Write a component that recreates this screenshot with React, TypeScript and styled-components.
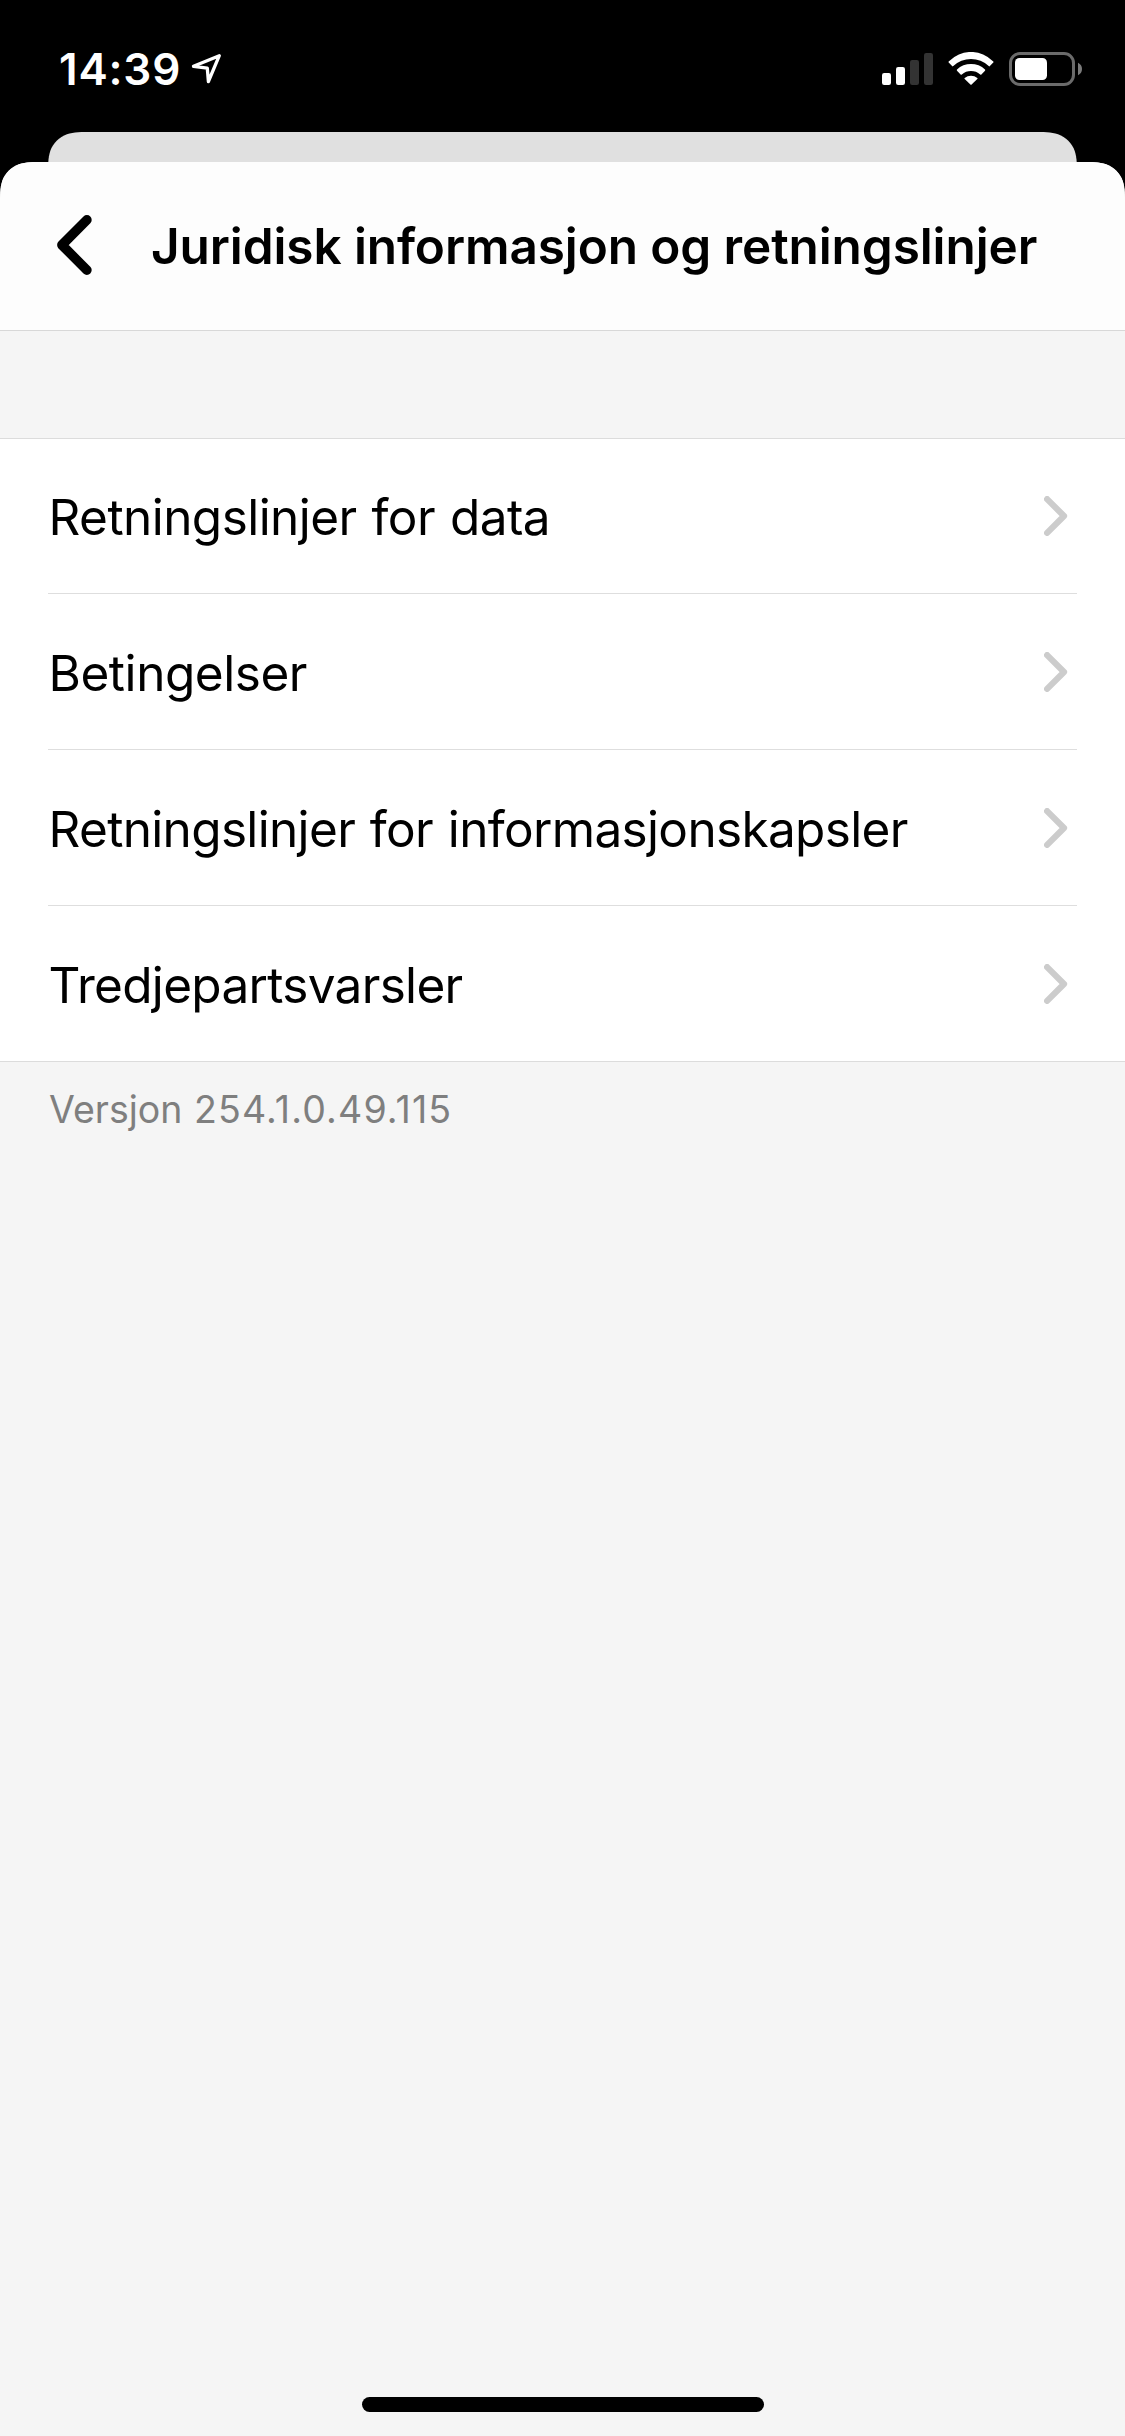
import React from "react";
import styled, { createGlobalStyle } from "styled-components";

const GlobalStyle = createGlobalStyle`
  body {
    margin: 0;
    background: #000;
    font-family: Inter, "Liberation Sans", sans-serif;
    -webkit-font-smoothing: antialiased;
  }
  * {
    box-sizing: border-box;
  }
`;

// Continuous-curvature top corners with a 30px nominal radius.
const sheetShape = (w: number, h: number) =>
  `path("M45.9 0 C32.65 0 26.05 0 18.94 2.25 C11.18 5.07 5.07 11.18 2.25 18.94 C0 26.05 0 32.65 0 45.9 V${h} H${w} V45.9 C${w} 32.65 ${w} 26.05 ${w - 2.25} 18.94 C${w - 5.07} 11.18 ${w - 11.18} 5.07 ${w - 18.94} 2.25 C${w - 26.05} 0 ${w - 32.65} 0 ${w - 45.9} 0 Z")`;

const Screen = styled.div`
  display: flex;
  flex-direction: column;
  width: 1125px;
  height: 2436px;
  background: #000;
  overflow: hidden;
`;

const StatusBar = styled.div`
  display: flex;
  justify-content: space-between;
  align-items: flex-start;
  flex: none;
  height: 132px;
  padding: 52px 42px 0 59px;
`;

const StatusGroup = styled.div`
  display: flex;
  height: 34px;
`;

const Clock = styled.span`
  width: 131px;
  color: #fff;
  font-size: 44px;
  font-weight: 600;
  line-height: 34px;
  letter-spacing: 0.8px;
  white-space: nowrap;
`;

const Glyph = styled.svg<{ $gap?: number }>`
  display: block;
  flex: none;
  margin-left: ${({ $gap = 0 }) => $gap}px;
`;

const BackSheet = styled.div`
  flex: none;
  height: 30px;
  margin: 0 48px;
  background: #e0e0e0;
  clip-path: ${sheetShape(1029, 60)};
`;

const Sheet = styled.main`
  display: flex;
  flex: 1;
  flex-direction: column;
  background: #f5f5f5;
  clip-path: ${sheetShape(1125, 2274)};
`;

const Header = styled.header`
  display: flex;
  align-items: center;
  flex: none;
  height: 169px;
  padding-left: 56px;
  background: #fdfdfd;
  border-bottom: 1px solid #d8d8d8;
`;

const BackButton = styled.button`
  display: flex;
  width: 95px;
  padding: 0 0 2px;
  border: 0;
  background: none;
`;

const Title = styled.h1`
  margin: 0;
  color: #000;
  font-size: 49.5px;
  font-weight: 600;
  line-height: 60px;
  letter-spacing: -0.1px;
  white-space: nowrap;
`;

const List = styled.ul`
  flex: none;
  margin: 107px 0 0;
  padding: 0 48px;
  list-style: none;
  background: #fff;
  box-shadow: inset 0 1px #dcdcdc, inset 0 -1px #dcdcdc;
`;

const Row = styled.li`
  display: flex;
  align-items: center;
  justify-content: space-between;
  height: 156px;
  padding: 1px 9px 0 0.5px;
  border-bottom: 1px solid #dedede;

  &:last-child {
    border-bottom-color: transparent;
  }
`;

const RowLabel = styled.span<{ $tracking: number }>`
  padding-top: 2px;
  color: #000;
  font-size: 49.5px;
  line-height: 60px;
  letter-spacing: ${({ $tracking }) => $tracking}px;
  word-spacing: 1.5px;
  white-space: nowrap;
`;

const Version = styled.p`
  flex: 1;
  margin: 0;
  padding: 25px 49px 0;
  color: #7f7f7f;
  font-size: 37.5px;
  line-height: 46px;
`;

const VersionNumber = styled.span`
  margin-left: 1px;
  letter-spacing: 1.15px;
`;

const HomeIndicator = styled.div`
  align-self: center;
  flex: none;
  width: 402px;
  height: 15px;
  margin: 0 0 24px 1px;
  border-radius: 7.5px;
  background: #000;
`;

const rows = [
  { label: "Retningslinjer for data", tracking: -0.55 },
  { label: "Betingelser", tracking: -0.45 },
  { label: "Retningslinjer for informasjonskapsler", tracking: -0.66 },
  { label: "Tredjepartsvarsler", tracking: -0.69 },
];

const LocationArrow = () => (
  <Glyph width="34" height="34" viewBox="0 0 34 34" fill="none">
    <path
      d="M29.3 3.7 L3.5 14.3 L17.3 16.1 L18.4 29.5 Z"
      stroke="#fff"
      strokeWidth="3.3"
      strokeLinejoin="round"
    />
  </Glyph>
);

const Signal = () => (
  <Glyph width="51" height="34" viewBox="0 0 51 34">
    <rect x="0" y="21" width="9" height="12" rx="2.2" fill="#fff" />
    <rect x="14" y="15" width="9" height="18" rx="2.2" fill="#fff" />
    <rect x="28" y="8" width="9" height="25" rx="2.2" fill="#333" />
    <rect x="42" y="1" width="9" height="32" rx="2.2" fill="#333" />
  </Glyph>
);

const Wifi = () => (
  <Glyph $gap={15} width="46" height="34" viewBox="0 0 46 34" fill="#fff">
    <path d="M.7 9.4 A31 31 0 0 1 45.3 9.4 Q45.8 10 45.3 10.6 L41.9 14.1 Q41.3 14.7 40.7 14.1 A25.5 25.5 0 0 0 5.3 14.1 Q4.7 14.7 4.1 14.1 L.7 10.6 Q.2 10 .7 9.4 Z" />
    <path d="M9 17.6 A20 20 0 0 1 37 17.6 Q37.5 18.2 37 18.8 L33.4 22.4 Q32.8 23 32.2 22.5 A14 14 0 0 0 13.8 22.5 Q13.2 23 12.6 22.4 L9 18.8 Q8.5 18.2 9 17.6 Z" />
    <path d="M16.7 25.9 A10 10 0 0 1 29.3 25.9 Q29.9 26.4 29.3 27 L23.6 32.6 Q23 33.1 22.4 32.6 L16.7 27 Q16.1 26.4 16.7 25.9 Z" />
  </Glyph>
);

const Battery = () => (
  <Glyph $gap={15} width="74" height="34" viewBox="0 0 74 34">
    <rect x="1.5" y="1.5" width="63" height="31" rx="9.5" fill="none" stroke="#6b6b6b" strokeWidth="3" />
    <rect x="6" y="6" width="32" height="22" rx="4.5" fill="#fff" />
    <path d="M69 10.8 Q73 12.8 73 17 Q73 21.2 69 23.2 Z" fill="#7b7b7b" />
  </Glyph>
);

const BackChevron = () => (
  <Glyph width="38" height="62" viewBox="0 0 38 62" fill="none">
    <path
      d="M30.9 5.9 L5.9 31 L30.9 56.1"
      stroke="#000"
      strokeWidth="9.6"
      strokeLinecap="round"
      strokeLinejoin="round"
    />
  </Glyph>
);

const RowChevron = () => (
  <Glyph width="24" height="40" viewBox="0 0 24 40" fill="none">
    <path
      d="M3.1 3.1 L20 20 L3.1 36.9"
      stroke="#ccc"
      strokeWidth="6.2"
      strokeLinecap="round"
      strokeLinejoin="round"
    />
  </Glyph>
);

export default function App() {
  return (
    <Screen>
      <GlobalStyle />
      <StatusBar>
        <StatusGroup>
          <Clock>14:39</Clock>
          <LocationArrow />
        </StatusGroup>
        <StatusGroup>
          <Signal />
          <Wifi />
          <Battery />
        </StatusGroup>
      </StatusBar>
      <BackSheet />
      <Sheet>
        <Header>
          <BackButton>
            <BackChevron />
          </BackButton>
          <Title>Juridisk informasjon og retningslinjer</Title>
        </Header>
        <List>
          {rows.map((row) => (
            <Row key={row.label}>
              <RowLabel $tracking={row.tracking}>{row.label}</RowLabel>
              <RowChevron />
            </Row>
          ))}
        </List>
        <Version>
          Versjon <VersionNumber>254.1.0.49.115</VersionNumber>
        </Version>
        <HomeIndicator />
      </Sheet>
    </Screen>
  );
}
